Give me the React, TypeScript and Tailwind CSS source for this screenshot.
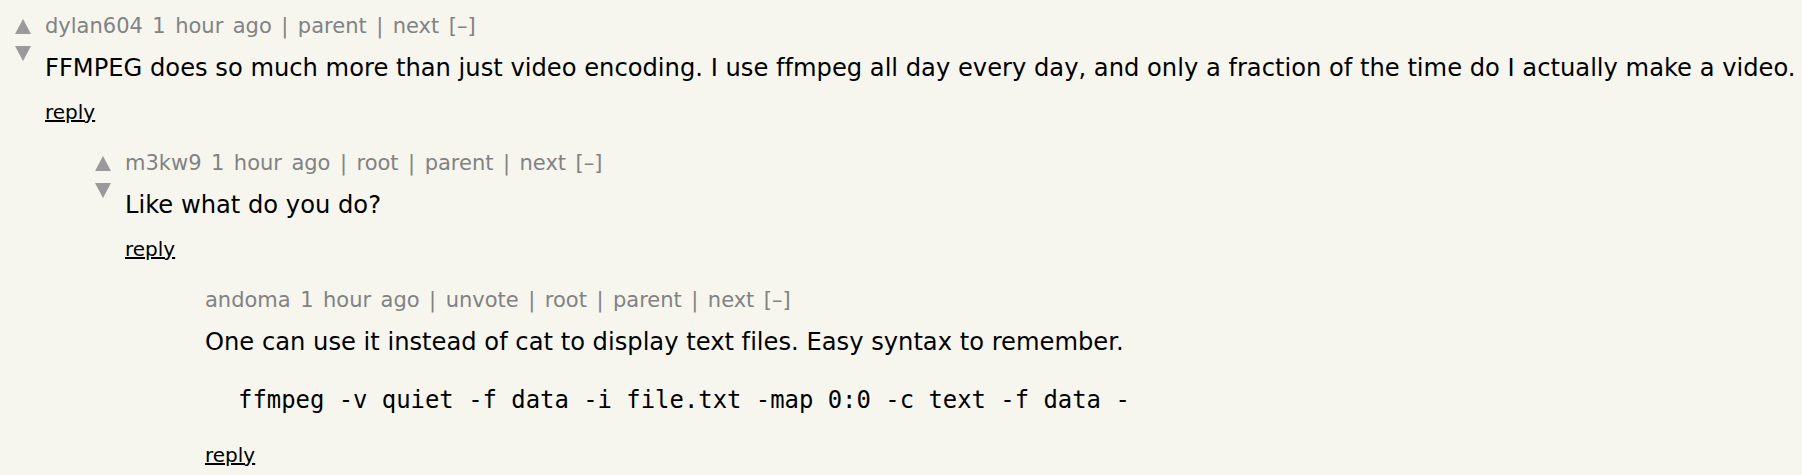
import React from 'react';

type Comment = {
  user: string;
  links: string[];
  voted?: boolean;
  level: number;
  body: React.ReactNode;
};

const COMMENTS: Comment[] = [
  {
    user: 'dylan604',
    links: ['parent', 'next'],
    level: 0,
    body: (
      <p className="mt-[15px] leading-[30px]">
        FFMPEG does so much more than just video encoding. I use ffmpeg all day every day, and only
        a fraction of the time do I actually make a video.
      </p>
    ),
  },
  {
    user: 'm3kw9',
    links: ['root', 'parent', 'next'],
    level: 1,
    body: <p className="mt-[15px] leading-[30px]">Like what do you do?</p>,
  },
  {
    user: 'andoma',
    links: ['unvote', 'root', 'parent', 'next'],
    voted: true,
    level: 2,
    body: (
      <>
        <p className="mt-[15px] leading-[30px]">
          One can use it instead of cat to display text files. Easy syntax to remember.
        </p>
        <pre className="mt-[28px] ml-[33px] font-['DejaVu_Sans_Mono',monospace] text-[23.9px] leading-[30px]">
          ffmpeg -v quiet -f data -i file.txt -map 0:0 -c text -f data -
        </pre>
      </>
    ),
  },
];

const Arrow = ({ down }: { down?: boolean }) => (
  <svg width="16" height="15" viewBox="0 0 16 15" className="block">
    <polygon points={down ? '0,0 16,0 8,15' : '8,0 16,15 0,15'} fill="#9a9a9a" />
  </svg>
);

export default function App() {
  return (
    <div className="min-h-[475px] bg-[#f6f6ef] pl-[15px] pt-[14px] font-['DejaVu_Sans',sans-serif] text-black [font-variant-ligatures:none]">
      {COMMENTS.map((comment, i) => (
        <div
          key={comment.user}
          className={`flex ${i > 0 ? 'mt-[27px]' : ''} ${
            comment.level === 1 ? 'ml-[80px]' : comment.level === 2 ? 'ml-[160px]' : ''
          }`}
        >
          <div className="w-[30px] shrink-0 pt-[5px]">
            {!comment.voted && (
              <div className="flex flex-col gap-[12px]">
                <Arrow />
                <Arrow down />
              </div>
            )}
          </div>
          <div className="text-[24.2px]">
            <div className="text-[21px] leading-[24px] text-[#828282] [word-spacing:2.8px]">
              {comment.user} 1 hour ago{' '}
              {comment.links.map((link) => (
                <span key={link}>| {link} </span>
              ))}
              [–]
            </div>
            {comment.body}
            <div className={`${comment.voted ? 'mt-[28px]' : 'mt-[17px]'} text-[20px] leading-[24px]`}>
              <span className="underline">reply</span>
            </div>
          </div>
        </div>
      ))}
    </div>
  );
}
